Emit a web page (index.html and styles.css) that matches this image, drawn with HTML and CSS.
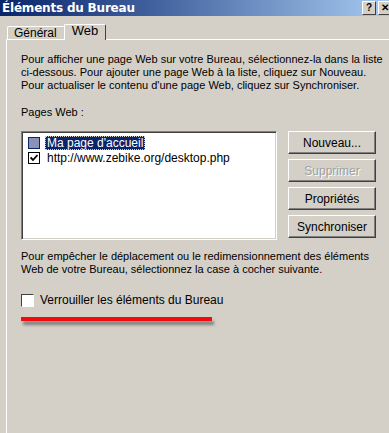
FILE: index.html
```html
<!DOCTYPE html>
<html>
<head>
	<meta charset="utf-8">
	<title>Éléments du Bureau</title>
	<link rel="stylesheet" href="styles.css">
</head>
<body>
<div class="window">
	<div class="titlebar">
		<span class="title">Éléments du Bureau</span>
		<div class="caption-buttons">
			<span class="cap-btn">?</span>
			<span class="cap-btn">✕</span>
		</div>
	</div>

	<div class="tabs">
		<div class="tab">Général</div>
		<div class="tab active">Web</div>
	</div>

	<div class="panel">
		<p class="intro">Pour afficher une page Web sur votre Bureau, sélectionnez-la dans la liste ci-dessous. Pour ajouter une page Web à la liste, cliquez sur Nouveau. Pour actualiser le contenu d'une page Web, cliquez sur Synchroniser.</p>

		<div class="label">Pages Web :</div>

		<div class="pages-row">
			<div class="list">
				<div class="item">
					<span class="box box-selected"></span>
					<span class="item-text selected">Ma page d'accueil</span>
				</div>
				<div class="item">
					<span class="box checked">
						<svg width="8" height="8" viewBox="0 0 8 8"><path d="M0.5 3.5 L3 6 L7.5 1" fill="none" stroke="#000" stroke-width="1.8"/></svg>
					</span>
					<span class="item-text">http://www.zebike.org/desktop.php</span>
				</div>
			</div>

			<div class="buttons">
				<button class="btn">Nouveau...</button>
				<button class="btn disabled">Supprimer</button>
				<button class="btn">Propriétés</button>
				<button class="btn">Synchroniser</button>
			</div>
		</div>

		<p class="note">Pour empêcher le déplacement ou le redimensionnement des éléments Web de votre Bureau, sélectionnez la case à cocher suivante.</p>

		<div class="lock">
			<span class="box"></span>
			<span>Verrouiller les éléments du Bureau</span>
		</div>

		<div class="underline"></div>
	</div>
</div>
</body>
</html>
```

FILE: styles.css
```css
html { font-family: "Liberation Sans", Arial, sans-serif; }

body {
	margin: 0;
	padding: 0;
	background: #d4d0c8;
	overflow: hidden;
}

.window {
	width: 389px;
	height: 433px;
	overflow: hidden;
	background: #d4d0c8;
	font-size: 11px;
	color: #000;
}

.titlebar {
	height: 16px;
	display: flex;
	align-items: center;
	justify-content: space-between;
	background: linear-gradient(to right, #0a246a, #3a5a98 35%, #a6caf0);
	padding-left: 2px;
}

.title {
	color: #fff;
	font-weight: bold;
	font-size: 12px;
	font-family: "DejaVu Sans", sans-serif;
	letter-spacing: -0.2px;
}

.caption-buttons {
	display: flex;
	gap: 2px;
	margin-right: -3px;
	align-self: flex-start;
	margin-top: 1px;
}

.cap-btn {
	width: 12px;
	height: 12px;
	background: #d4d0c8;
	border-top: 1px solid #fff;
	border-left: 1px solid #fff;
	border-right: 1px solid #404040;
	border-bottom: 1px solid #404040;
	font-size: 10px;
	font-weight: bold;
	line-height: 12px;
	text-align: center;
	color: #000;
}

/* onglets */
.tabs {
	display: flex;
	align-items: flex-end;
	height: 23px;
	padding-left: 7px;
}

.tab {
	height: 11px;
	padding: 0 7px 1px 6px;
	line-height: 12px;
	border-top: 1px solid #fff;
	border-left: 1px solid #fff;
	border-right: 1px solid #404040;
	border-radius: 2px 2px 0 0;
	font-size: 12px;
}

.tab.active {
	height: 15px;
	margin-left: -1px;
	padding: 0 7px;
	line-height: 12px;
	font-size: 13px;
	position: relative;
	z-index: 1;
	background: #d4d0c8;
	margin-bottom: -1px;
}

.panel {
	margin-left: 6px;
	border-top: 1px solid #fff;
	border-left: 1px solid #fff;
	padding: 13px 0 0 14px;
	height: 400px;
}

.intro, .note {
	margin: 0;
	width: 365px;
	line-height: 13px;
}

.label {
	margin-top: 14px;
	line-height: 13px;
}

.pages-row {
	display: flex;
	margin-top: 12px;
}

.list {
	width: 248px;
	height: 104px;
	background: #fff;
	border-top: 1px solid #808080;
	border-left: 1px solid #808080;
	border-right: 1px solid #fff;
	border-bottom: 1px solid #fff;
	box-shadow: inset 1px 1px 0 #404040, inset -1px -1px 0 #d4d0c8;
	padding: 3px 0 0 6px;
}

.item {
	display: flex;
	align-items: center;
	height: 15px;
	gap: 5px;
}

.box {
	width: 10px;
	height: 10px;
	background: #fff;
	border: 1px solid #000;
	display: inline-flex;
	align-items: center;
	justify-content: center;
	flex: none;
}

.box-selected {
	background: #8a92b6;
	border-color: #0a246a;
}

.item-text {
	padding: 0 2px;
	line-height: 14px;
	font-size: 12px;
}

.item-text.selected {
	background: #0a246a;
	color: #fff;
	outline: 1px dotted #d4d0c8;
	outline-offset: -1px;
}

.buttons {
	display: flex;
	flex-direction: column;
	gap: 5px;
	margin-left: 11px;
}

.btn {
	width: 88px;
	height: 23px;
	padding: 0;
	font-family: "Liberation Sans", Arial, sans-serif;
	font-size: 12px;
	color: #000;
	background: #d4d0c8;
	border-top: 1px solid #fff;
	border-left: 1px solid #fff;
	border-right: 1px solid #404040;
	border-bottom: 1px solid #404040;
	box-shadow: inset -1px -1px 0 #808080;
}

.btn.disabled {
	color: #a0a0a0;
	text-shadow: 1px 1px 0 #fff;
}

.note {
	margin-top: 10px;
}

.lock {
	display: flex;
	align-items: center;
	gap: 6px;
	margin-top: 17px;
	font-size: 12px;
}

.lock .box {
	width: 11px;
	height: 11px;
	border-top: 1px solid #404040;
	border-left: 1px solid #404040;
	border-right: 1px solid #fff;
	border-bottom: 1px solid #fff;
}

.underline {
	width: 191px;
	height: 4px;
	margin-top: 10px;
	background: #f00c0c;
	box-shadow: 2px 4px 3px rgba(60, 60, 60, 0.55);
}
```
